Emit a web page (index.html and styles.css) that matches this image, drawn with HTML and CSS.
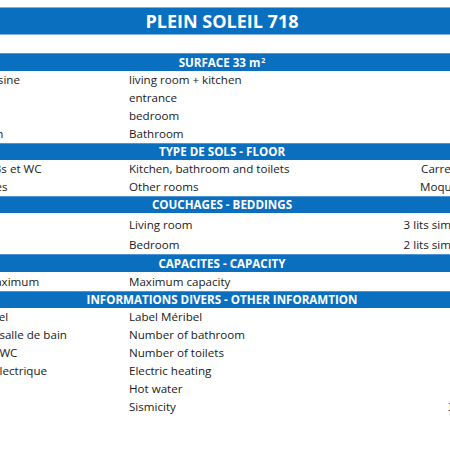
FILE: index.html
```html
<!DOCTYPE html>
<html lang="fr">
<head>
<meta charset="utf-8">
<title>Plein Soleil 718</title>
<link rel="stylesheet" href="styles.css">
</head>
<body>
<div class="sheet">
  <div class="title">PLEIN SOLEIL 718</div>
  <div class="gap"></div>

  <div class="bar">SURFACE 33 m<sup>2</sup></div>
  <div class="row"><span class="c1">Séjour + cuisine</span><span class="c2">living room + kitchen</span><span class="c3"></span></div>
  <div class="row"><span class="c1">Entrée</span><span class="c2">entrance</span><span class="c3"></span></div>
  <div class="row"><span class="c1">Chambre</span><span class="c2">bedroom</span><span class="c3"></span></div>
  <div class="row"><span class="c1">Salle de bain</span><span class="c2">Bathroom</span><span class="c3"></span></div>

  <div class="bar bar-s">TYPE DE SOLS - FLOOR</div>
  <div class="row"><span class="c1">Cuisine, SdBs et WC</span><span class="c2">Kitchen, bathroom and toilets</span><span class="c3">Carrelage</span></div>
  <div class="row"><span class="c1">Autres pièces</span><span class="c2">Other rooms</span><span class="c3">Moquette</span></div>

  <div class="bar bar-s">COUCHAGES - BEDDINGS</div>
  <div class="row row-tall"><span class="c1">Séjour</span><span class="c2">Living room</span><span class="c3">3 lits simples</span></div>
  <div class="row row-tall"><span class="c1">Chambre</span><span class="c2">Bedroom</span><span class="c3">2 lits simples</span></div>

  <div class="bar">CAPACITES - CAPACITY</div>
  <div class="row row-mid"><span class="c1">Capacité maximum</span><span class="c2">Maximum capacity</span><span class="c3"></span></div>

  <div class="bar bar-s">INFORMATIONS DIVERS - OTHER INFORAMTION</div>
  <div class="row"><span class="c1">Label Méribel</span><span class="c2">Label Méribel</span><span class="c3"></span></div>
  <div class="row"><span class="c1">Nombre de salle de bain</span><span class="c2">Number of bathroom</span><span class="c3"></span></div>
  <div class="row"><span class="c1">Nombre de WC</span><span class="c2">Number of toilets</span><span class="c3"></span></div>
  <div class="row"><span class="c1">Chauffage électrique</span><span class="c2">Electric heating</span><span class="c3"></span></div>
  <div class="row"><span class="c1">Eau chaude</span><span class="c2">Hot water</span><span class="c3"></span></div>
  <div class="row"><span class="c1">Sismicité</span><span class="c2">Sismicity</span><span class="c3 c3-left">3 / 5</span></div>
</div>
</body>
</html>
```
FILE: styles.css
```css
html, body {
  margin: 0;
  padding: 0;
  background: #ffffff;
  overflow: hidden;
  width: 450px;
  height: 450px;
}

.sheet {
  margin-left: -68px;
  width: 580px;
  padding-top: 7px;
  font-family: "Open Sans", "Noto Sans", sans-serif;
  font-size: 11.6px;
  color: #1a1a1a;
}

.title {
  height: 26px;
  background: #0b6fc0;
  border: 1px solid #7fb2e3;
  color: #ffffff;
  font-weight: 700;
  font-size: 18px;
  display: flex;
  align-items: center;
  justify-content: center;
}

.gap {
  height: 18px;
}

.bar {
  height: 18px;
  background: #0b6fc0;
  color: #ffffff;
  font-weight: 700;
  font-size: 11.6px;
  display: flex;
  align-items: center;
  justify-content: center;
  box-shadow: inset 0 1px 0 #4f95d6;
}

.bar-s {
  height: 17px;
}

.bar sup {
  font-size: 7px;
  line-height: 0;
  position: relative;
  top: -1px;
  margin-left: 1px;
}

.row {
  display: grid;
  grid-template-columns: 193px 175px 173px 39px;
  height: 18px;
  align-items: end;
}

.row-tall {
  height: 20.5px;
}

.row-mid {
  height: 19px;
}

.row span {
  white-space: nowrap;
  line-height: 16px;
  padding-bottom: 1px;
}

.c1 {
  padding-left: 3px;
}

.c2 {
  padding-left: 4px;
}

.c3 {
  text-align: right;
  justify-self: end;
}

.c3-left {
  justify-self: start;
  padding-left: 148px;
}
```
